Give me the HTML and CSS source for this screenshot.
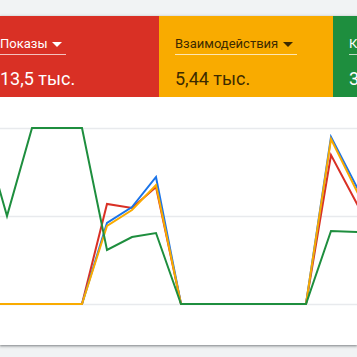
FILE: index.html
```html
<!DOCTYPE html>
<html lang="ru">
<head>
<meta charset="utf-8">
<link rel="stylesheet" href="styles.css">
</head>
<body>
<div class="card">
  <div class="tabs">
    <div class="tab tab-red">
      <div class="label">Показы <svg class="caret" viewBox="0 0 10 5" width="10" height="5"><path d="M0 0h10L5 5z"/></svg></div>
      <div class="value">13,5 тыс.</div>
    </div>
    <div class="tab tab-yellow">
      <div class="label">Взаимодействия <svg class="caret" viewBox="0 0 10 5" width="10" height="5"><path d="M0 0h10L5 5z"/></svg></div>
      <div class="value">5,44 тыс.</div>
    </div>
    <div class="tab tab-green">
      <div class="label">Клики <svg class="caret" viewBox="0 0 10 5" width="10" height="5"><path d="M0 0h10L5 5z"/></svg></div>
      <div class="value">3</div>
    </div>
  </div>
  <div class="chart">
    <svg width="357" height="248" viewBox="0 0 357 248">
      <g class="grid">
        <line x1="0" y1="31.5" x2="357" y2="31.5"/>
        <line x1="0" y1="119.5" x2="357" y2="119.5"/>
        <line x1="0" y1="207.5" x2="357" y2="207.5"/>
      </g>
      <polyline class="s-red" points="-18,207 82,207 107,107 132,111 156,90 181,207 306,207 331,58 381,152"/>
      <polyline class="s-blue" points="-18,207 82,207 107,126 132,110 156,80 181,207 306,207 331,40 381,137"/>
      <polyline class="s-yellow" points="-18,207 82,207 107,129 132,113 156,88 181,207 306,207 331,42 381,143"/>
      <polyline class="s-green" points="-18,31 7,119 32,31 82,31 107,153 132,140 156,136 181,207 306,207 331,134 381,136"/>
    </svg>
  </div>
</div>
</body>
</html>
```
FILE: styles.css
```css
html, body {
  margin: 0;
  padding: 0;
}
body {
  background: #f1f3f4;
  overflow: hidden;
  font-family: Roboto, "Liberation Sans", Arial, sans-serif;
  width: 357px;
  height: 357px;
}
.card {
  margin-top: 16px;
  background: #fff;
  width: 357px;
  box-shadow: 0 1px 2px rgba(60, 64, 67, 0.5), 0 1px 3px 1px rgba(60, 64, 67, 0.15);
}
.tabs {
  display: flex;
  margin-left: -16px;
  width: 600px;
}
.tab {
  flex: 0 0 174px;
  box-sizing: border-box;
  padding: 17px 16px 9px;
  height: 81px;
}
.tab-red { background: #d93025; color: #fff; flex-basis: 175px; }
.tab-yellow { background: #f9ab00; color: #3c2a00; }
.tab-green { background: #1e8e3e; color: #fff; }
.label {
  display: inline-flex;
  align-items: center;
  gap: 5px;
  font-size: 13px;
  line-height: 16px;
  padding-right: 4px;
  padding-bottom: 2px;
  border-bottom: 1px solid rgba(255, 255, 255, 0.7);
}
.caret { fill: currentColor; display: block; }
.value {
  margin-top: 12px;
  font-size: 18px;
  line-height: 24px;
}
.chart svg { display: block; }
.grid line { stroke: #e8eaed; stroke-width: 1.5; }
polyline { fill: none; stroke-width: 2; stroke-linejoin: miter; }
.s-red { stroke: #d93025; }
.s-blue { stroke: #1a73e8; }
.s-yellow { stroke: #f9ab00; }
.s-green { stroke: #1e8e3e; }
```
